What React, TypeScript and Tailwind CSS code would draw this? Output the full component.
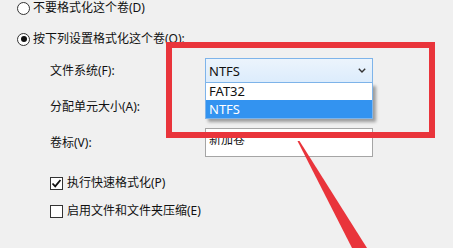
import React from "react";

const font = { fontFamily: '"Noto Sans", "Noto Sans CJK SC", sans-serif' };

function Radio({ checked }: { checked?: boolean }) {
  return (
    <span className="w-[13px] h-[13px] rounded-full border border-[#333] bg-white flex items-center justify-center shrink-0">
      {checked && <span className="w-[6px] h-[6px] rounded-full bg-[#111]" />}
    </span>
  );
}

function Check({ checked }: { checked?: boolean }) {
  return (
    <span className="w-[13px] h-[13px] border border-[#333] bg-white flex items-center justify-center shrink-0">
      {checked && (
        <svg width="11" height="11" viewBox="0 0 11 11">
          <path d="M1.5 5.5 L4.2 8.3 L9.5 2" fill="none" stroke="#111" strokeWidth="1.8" />
        </svg>
      )}
    </span>
  );
}

export default function App() {
  return (
    <div
      className="relative w-[453px] h-[248px] bg-[#f0f0f0] overflow-hidden text-[12px] leading-[16px] text-[#111]"
      style={font}
    >
      <div className="flex flex-col">
        <div className="flex items-center gap-[3px] pl-[17px] h-[16px]">
          <Radio />
          <span>不要格式化这个卷(D)</span>
        </div>
        <div className="flex items-center gap-[3px] pl-[17px] mt-[15px] h-[16px]">
          <Radio checked />
          <span>按下列设置格式化这个卷(O):</span>
        </div>
        <div className="flex items-center pl-[50px] mt-[11px] h-[25px]">
          <span className="w-[155px]">文件系统(F):</span>
          <div className="w-[168px] h-[25px] border border-[#7eb4ea] bg-gradient-to-b from-[#ecf4fc] to-[#dcecfc] flex items-center justify-between pl-[3px] pr-[6px]">
            <span className="text-[13px]">NTFS</span>
            <svg width="8" height="5" viewBox="0 0 8 5">
              <path d="M0.8 0.8 L4 4 L7.2 0.8" fill="none" stroke="#333" strokeWidth="1.4" />
            </svg>
          </div>
        </div>
        <div className="flex items-center pl-[50px] mt-[11px] h-[25px]">
          <span className="w-[155px]">分配单元大小(A):</span>
          <div className="w-[168px] h-[25px] border border-[#acacac] bg-[#e5e5e5]" />
        </div>
        <div className="flex items-center pl-[50px] mt-[9px] h-[29px]">
          <span className="w-[155px]">卷标(V):</span>
          <div className="w-[168px] h-[29px] border border-[#a5a5a5] bg-white flex items-start pl-[3px] pt-[3px]">
            <span>新加卷</span>
          </div>
        </div>
        <div className="flex items-center gap-[4px] pl-[50px] mt-[18px] h-[16px]">
          <Check checked />
          <span>执行快速格式化(P)</span>
        </div>
        <div className="flex items-center gap-[4px] pl-[50px] mt-[12px] h-[16px]">
          <Check />
          <span>启用文件和文件夹压缩(E)</span>
        </div>
      </div>

      {/* dropdown list */}
      <div className="absolute left-[205px] top-[83px] w-[168px] bg-white border border-[#7eb4ea] border-t-0 shadow-[3px_3px_3px_rgba(0,0,0,0.35)] text-[13px]">
        <div className="h-[17px] leading-[17px] pl-[3px]">FAT32</div>
        <div className="h-[18px] leading-[18px] pl-[3px] bg-[#3393f0] text-white">NTFS</div>
      </div>

      {/* red highlight rectangle */}
      <div className="absolute left-[166px] top-[42px] w-[269px] h-[96px] border-[6px] border-[#e9343b]" />

      {/* red arrow */}
      <svg className="absolute left-0 top-0" width="453" height="248" viewBox="0 0 453 248">
        <polygon points="297.5,141 299.5,141 367,248 352,248" fill="#e9343b" />
      </svg>
    </div>
  );
}
